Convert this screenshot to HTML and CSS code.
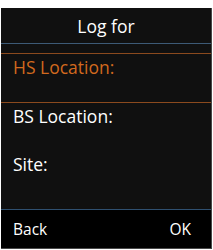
FILE: index.html
```html
<!DOCTYPE html>
<html lang="en">
<head>
    <meta charset="UTF-8">
    <title>Log for</title>
    <link rel="stylesheet" href="styles.css">
</head>
<body>
    <div class="screen">
        <div class="title">Log for</div>

        <!-- Entries -->
        <div class="list">
            <div class="item selected">HS Location:</div>
            <div class="item">BS Location:</div>
            <div class="item">Site:</div>
        </div>

        <!-- Soft keys -->
        <div class="softkeys">
            <span>Back</span>
            <span>OK</span>
        </div>
    </div>
</body>
</html>
```

FILE: styles.css
```css
body {
    margin: 0;
    background: #fff;
    font-family: "Open Sans", sans-serif;
}
.screen {
    margin: 8px 0 0 1px;
    width: 210px;
    height: 240px;
    background: #101010;
    border-right: 1px solid #4a4a4a;
    border-bottom: 1px solid #4a4a4a;
    display: flex;
    flex-direction: column;
    color: #fff;
}
.title {
    height: 33px;
    padding-top: 2px;
    line-height: 33px;
    text-align: center;
    font-size: 17.5px;
    border-bottom: 1px solid #3d5a76;
}
.list {
    flex: 1;
    padding-top: 9px;
}
.item {
    height: 48px;
    padding: 0 12px;
    font-size: 17.5px;
    line-height: 27px;
}
.item.selected {
    color: #d2691e;
    border-top: 1px solid #8b4a1e;
    border-bottom: 1px solid #8b4a1e;
}
.softkeys {
    height: 38px;
    background: #000;
    border-top: 1px solid #2f5070;
    display: flex;
    justify-content: space-between;
    align-items: center;
    padding: 0 20px 0 12px;
    font-size: 15.5px;
}
```
